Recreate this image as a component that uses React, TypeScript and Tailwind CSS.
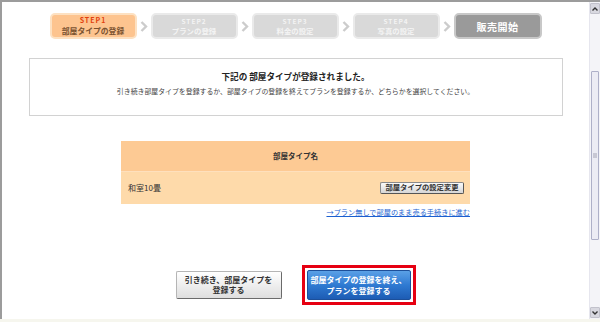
import React from "react";

const steps = [
  { label: "STEP1", title: "部屋タイプの登録", state: "active" },
  { label: "STEP2", title: "プランの登録", state: "off" },
  { label: "STEP3", title: "料金の設定", state: "off" },
  { label: "STEP4", title: "写真の設定", state: "off" },
];

function Arrow() {
  return (
    <div className="w-[14px] flex items-center justify-center">
      <svg width="8" height="11" viewBox="0 0 8 11">
        <path d="M1.5 1 L6 5.5 L1.5 10" fill="none" stroke="#cccccc" strokeWidth="2.4" />
      </svg>
    </div>
  );
}

function StepBox({ label, title, state }: { label: string; title: string; state: string }) {
  const active = state === "active";
  return (
    <div
      className={
        active
          ? "w-[87px] h-[26px] rounded-[5px] border-2 border-[#fde1c2] bg-[#fdc48f] flex flex-col items-center justify-center leading-none gap-[3px]"
          : "w-[87px] h-[26px] rounded-[5px] border-2 border-[#eaeaea] bg-[#d9d9d9] flex flex-col items-center justify-center leading-none gap-[3px]"
      }
    >
      <span
        className={
          active
            ? "text-[7px] font-bold tracking-[1px] text-[#e2400c]"
            : "text-[6.5px] font-bold tracking-[1px] text-[#f4f4f4]"
        }
      >
        {label}
      </span>
      <span className={active ? "text-[7.8px] font-bold text-[#7a5230]" : "text-[7.4px] font-bold text-[#f4f4f4]"}>
        {title}
      </span>
    </div>
  );
}

function Scrollbar() {
  return (
    <div className="w-[11px] flex flex-col bg-[#f4f4f8] border-l border-[#e6e6ee] pt-[1px] pb-[1px]">
      <div className="h-[11px] bg-[#d8d8e0] border border-[#c2c2cc] rounded-[1px] flex items-center justify-center">
        <svg width="6" height="4" viewBox="0 0 6 4">
          <path d="M0.5 3.5 L3 1 L5.5 3.5" fill="none" stroke="#333" strokeWidth="1.4" />
        </svg>
      </div>
      <div className="flex-1 flex flex-col">
        <div className="h-[57px]" />
        <div className="h-[169px] mx-[1px] bg-[#ececf4] border border-[#aeb0c8] rounded-[1px] flex items-center justify-center">
          <div className="w-[4px] h-[5px] bg-[#c8c8d4]" />
        </div>
      </div>
      <div className="h-[11px] bg-[#d8d8e0] border border-[#c2c2cc] rounded-[1px] flex items-center justify-center">
        <svg width="6" height="4" viewBox="0 0 6 4">
          <path d="M0.5 0.5 L3 3 L5.5 0.5" fill="none" stroke="#333" strokeWidth="1.4" />
        </svg>
      </div>
    </div>
  );
}

export default function App() {
  return (
    <div className="w-[600px] h-[322px] overflow-hidden bg-white flex flex-col font-['Noto_Sans_CJK_JP',sans-serif] text-[#333]">
      <div className="flex flex-1 min-h-0 border-t-2 border-l-2 border-[#9c9c9c]">
        <main className="flex-1 flex flex-col items-center">
          {/* steps */}
          <div className="mt-[11px] flex items-stretch">
            {steps.map((s) => (
              <React.Fragment key={s.label}>
                <StepBox {...s} />
                <Arrow />
              </React.Fragment>
            ))}
            <div className="w-[88px] h-[26px] rounded-[5px] border-2 border-[#c8c8c8] bg-[#9a9a9a] flex items-center justify-center">
              <span className="text-[10px] font-bold text-white tracking-[0.5px]">販売開始</span>
            </div>
          </div>

          {/* message */}
          <div className="mt-[19px] w-[534px] h-[58px] border border-[#d2d2d2] flex flex-col items-center pt-[13px] leading-none">
            <p className="text-[8.6px] font-bold text-[#222]">下記の 部屋タイプが登録されました。</p>
            <p className="mt-[7px] text-[6.9px] text-[#444]">
              引き続き部屋タイプを登録するか、部屋タイプの登録を終えてプランを登録するか、どちらかを選択してください。
            </p>
          </div>

          {/* table */}
          <div className="mt-[25px] w-[349px] flex flex-col">
            <div className="h-[31px] bg-[#fdca94] border-b border-[#fee0bd] flex items-center justify-center">
              <span className="text-[7.5px] font-bold text-[#333]">部屋タイプ名</span>
            </div>
            <div className="h-[32px] bg-[#fedaaa] flex items-center justify-between pl-[7px] pr-[6px]">
              <span className="text-[8px] text-[#333]">和室10畳</span>
              <button className="w-[84px] h-[12px] rounded-[2px] bg-gradient-to-b from-[#fafafa] to-[#d6d6d6] border border-[#8a8a8a] border-r-[#555] border-b-[#555] flex items-center justify-center">
                <span className="text-[7.3px] font-bold text-[#333] leading-none">部屋タイプの設定変更</span>
              </button>
            </div>
            <div className="flex justify-end mt-[2px]">
              <a className="text-[7.2px] text-[#1b5fd0] underline leading-[12px]">
                →プラン無しで部屋のまま売る手続きに進む
              </a>
            </div>
          </div>

          {/* buttons */}
          <div className="mt-[47px] flex items-center gap-[20px]">
            <button className="w-[106px] h-[28px] rounded-[2px] bg-gradient-to-b from-[#ffffff] to-[#dedede] border border-[#b5b5b5] border-r-[#6a6a6a] border-b-[#6a6a6a] flex flex-col items-center justify-center leading-[10px]">
              <span className="text-[8px] font-bold text-[#333]">引き続き、部屋タイプを</span>
              <span className="text-[8px] font-bold text-[#333]">登録する</span>
            </button>
            <div className="w-[114px] h-[40px] border-[3px] border-[#e60012] p-[2px] bg-white">
              <button className="w-full h-full rounded-[2px] bg-gradient-to-b from-[#5aa0e6] via-[#2f7ad2] to-[#1d5cb4] border border-[#1d4f99] flex flex-col items-center justify-center leading-[11px]">
                <span className="text-[8px] font-bold text-white">部屋タイプの登録を終え、</span>
                <span className="text-[8px] font-bold text-white">プランを登録する</span>
              </button>
            </div>
          </div>
        </main>
        <Scrollbar />
      </div>
      <div className="h-[3px] bg-[#f6f6ee]" />
    </div>
  );
}
